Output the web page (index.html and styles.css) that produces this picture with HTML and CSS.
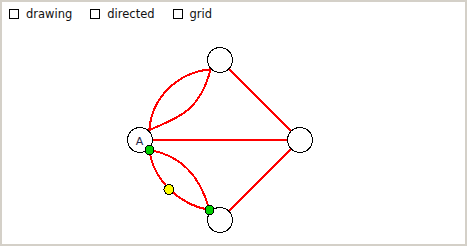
FILE: index.html
```html
<!DOCTYPE html>
<html>
<head>
<meta charset="utf-8">
<link rel="stylesheet" href="styles.css">
</head>
<body>
<div class="frame">
  <div class="toolbar">
    <label class="opt"><input type="checkbox" class="box"><span>drawing</span></label>
    <label class="opt"><input type="checkbox" class="box"><span>directed</span></label>
    <label class="opt"><input type="checkbox" class="box"><span>grid</span></label>
  </div>
  <svg class="canvas" width="463" height="218" viewBox="2 26 463 218" xmlns="http://www.w3.org/2000/svg">
    <g class="edges" fill="none" stroke="#ff0000" stroke-width="2">
      <line x1="140" y1="140" x2="300" y2="140"/>
      <line x1="220" y1="60" x2="300" y2="140"/>
      <line x1="300" y1="140" x2="220" y2="220"/>
      <path d="M149.3 130 C152 95 180 72 210.7 69.3"/>
      <path d="M149.3 130 C185 115 200 108 210.7 69.3"/>
      <path d="M149.5 150 C180 155 200 175 209.5 210"/>
      <path d="M149.5 150 C153 180 180 205 209.5 210"/>
    </g>
    <g class="nodes" fill="#ffffff" stroke="#000000" stroke-width="1">
      <circle cx="220" cy="60" r="12.5"/>
      <circle cx="300" cy="140" r="12.5"/>
      <circle cx="140" cy="140" r="12.5"/>
      <circle cx="220" cy="220" r="12.5"/>
    </g>
    <text x="139.5" y="145" class="label" text-anchor="middle">A</text>
    <g class="dots" stroke="#000000" stroke-width="1">
      <circle cx="149.5" cy="150" r="4.5" fill="#00d000"/>
      <circle cx="209.5" cy="210" r="4.5" fill="#00d000"/>
      <circle cx="169" cy="189.5" r="5" fill="#ffff00"/>
    </g>
  </svg>
</div>
</body>
</html>
```
FILE: styles.css
```css
html, body {
  margin: 0;
  padding: 0;
  background: #ffffff;
}
.frame {
  width: 467px;
  height: 246px;
  box-sizing: border-box;
  border: 2px solid #d4d0c8;
  background: #ffffff;
  overflow: hidden;
}
.toolbar {
  height: 24px;
  display: flex;
  align-items: center;
  padding-left: 7px;
  font-family: "DejaVu Sans", Verdana, sans-serif;
  font-size: 11.5px;
  color: #111111;
}
.opt {
  display: flex;
  align-items: center;
  margin-right: 18px;
}
.box {
  appearance: none;
  -webkit-appearance: none;
  width: 10px;
  height: 10px;
  margin: 0 7px 0 0;
  box-sizing: border-box;
  border: 1px solid #000000;
  background: #ffffff;
  border-radius: 0;
}
.canvas {
  display: block;
}
.edges, .nodes, .dots {
  shape-rendering: crispEdges;
}
.label {
  font-family: "DejaVu Sans", Verdana, sans-serif;
  font-size: 11px;
  fill: #222244;
}
```
